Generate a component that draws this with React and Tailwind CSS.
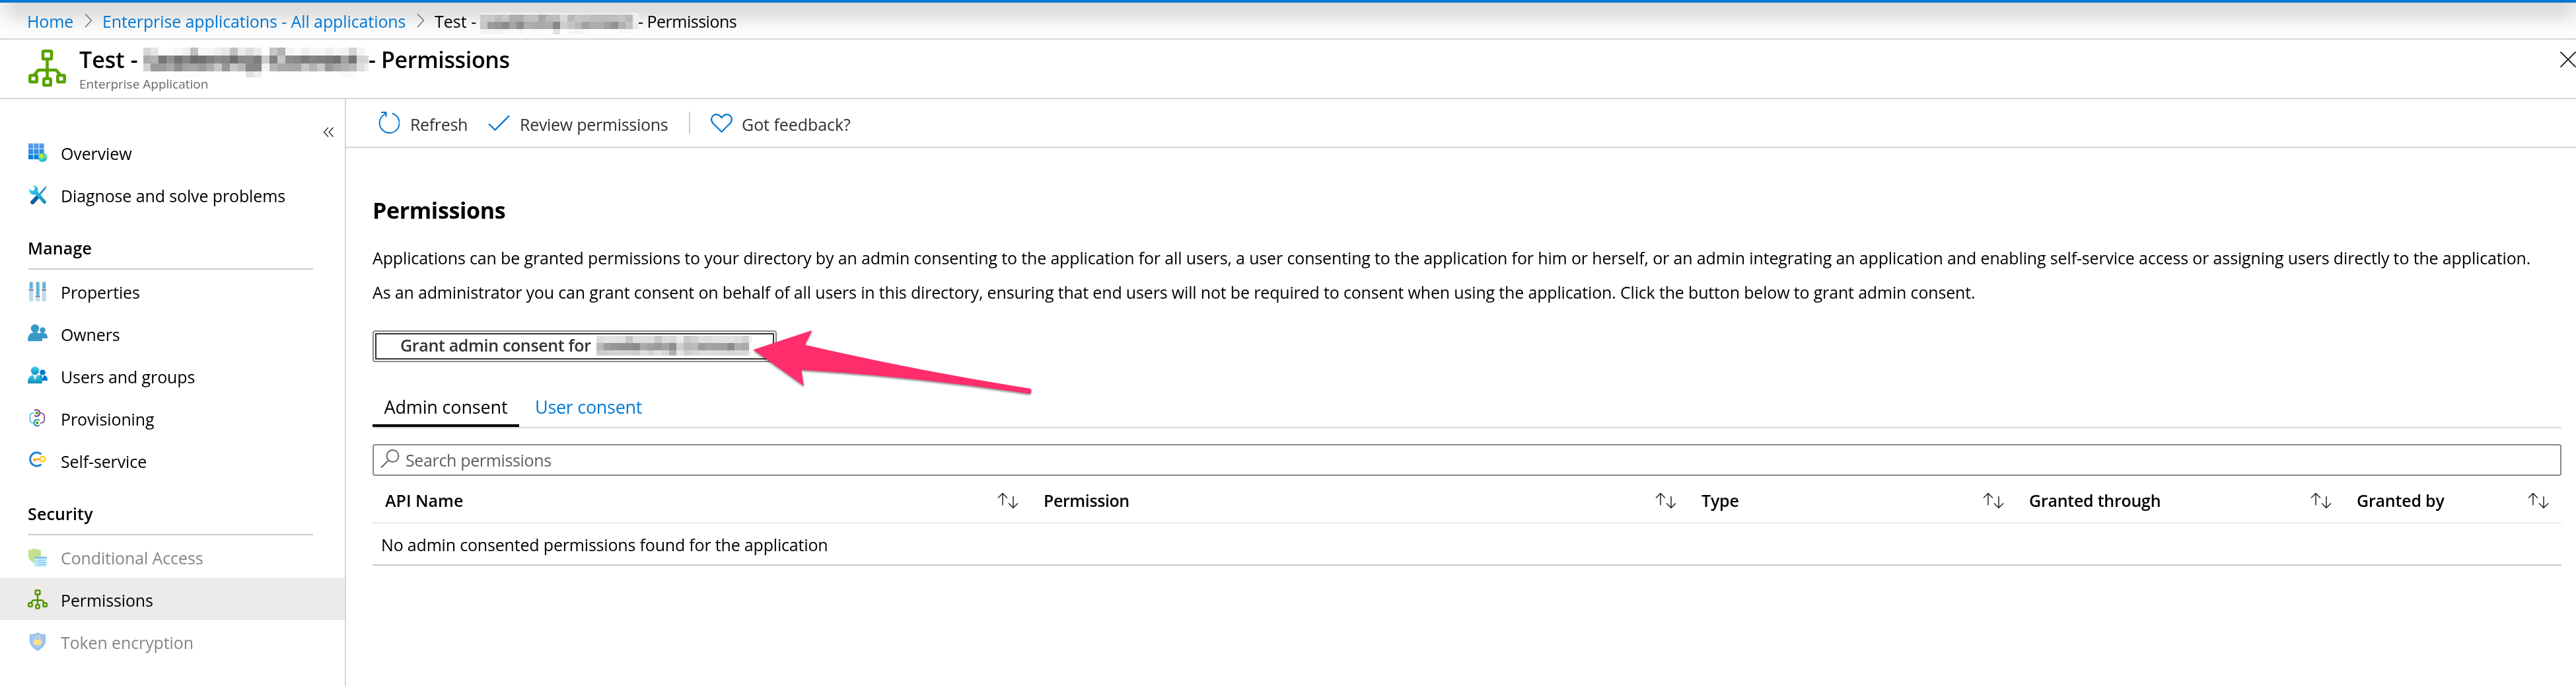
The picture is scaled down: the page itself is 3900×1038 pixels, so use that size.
import React from "react";

/* ---------- redacted names ---------- */

function Redacted({ rows, widths, heights, className = "" }) {
  return (
    <span
      className={"grid shrink-0 " + className}
      style={{ gridTemplateColumns: widths, gridTemplateRows: heights }}
    >
      {rows.flatMap((row, r) =>
        row.split(" ").map((v, c) => (
          <span key={r + "-" + c} style={{ backgroundColor: "#" + v + v + v }} />
        ))
      )}
    </span>
  );
}

const TITLE_ROWS = [
  "d6 e4 ff fa f8 f0 be f8 f5 ee e6 c0 eb dd eb ff c6 b2 f3 f8 ee f6 f8 ef f6 f2 d3 f4 fe",
  "ab b2 76 92 74 86 6d 72 80 8b 86 6f 8a 8d 7e cb 82 c6 8d 88 7b 84 7f 7a 72 a0 74 d3 d6",
  "d1 9b 9d aa 8e a3 a6 9c ab c8 98 c6 b7 88 88 f0 b5 a9 a7 a7 c6 b2 c8 98 a8 b0 b8 dd ee",
  "fd fc fc ff fe fb fa fe fe fe fb ff fe e0 ee ff fe fb fe fe fe ff fe fd fe f8 fa ff ff",
];

const CRUMB_ROWS = [
  "f1 f7 f7 f7 f7 f7 f7 f7 f7 f7 f7 f3 f6 f6 f0 f2 f2 f2 f2 f2 f0 f3",
  "cb cb bd c6 ae ae bf c0 a7 ba be d9 b8 c5 c4 be be bd be c3 b8 ee",
  "c6 9c 98 8c a4 8c ae aa a9 ac 88 cd c5 b8 a0 ad ae a0 92 b2 c2 eb",
  "f3 f7 f2 f8 fb f7 fd fa fe fd e2 ff f8 f4 fb ff ff ff ff f8 f8 fd",
];

const BUTTON_ROWS = [
  "de e4 e3 e2 c6 e0 de dd c8 dc d9 eb c9 d2 e0 dd e2 e2 e2 de d2 f0",
  "b8 9d 96 92 92 8c aa a0 9a a3 90 d0 b9 bb 9c a3 a1 a1 8c b0 a9 fa",
  "cc d0 d2 d3 d2 ce df d4 e2 d7 b0 e6 cf d5 dc dc da da d4 da da f5",
];

/* ---------- icons ---------- */

function AppIcon({ size }) {
  return (
    <svg width={size} height={size} viewBox="0 0 57 57" fill="none" stroke="#57a300" strokeWidth="4.6">
      <path d="M28.5 15v28M8.5 39l6.5-8h27l6.5 8" strokeLinejoin="round" />
      <g fill="#fff">
        <rect x="22" y="2.3" width="13" height="12" rx="1.6" />
        <rect x="2.3" y="39" width="10.4" height="10" rx="1.6" />
        <rect x="23.3" y="44" width="10.4" height="10" rx="1.6" />
        <rect x="44.3" y="39" width="10.4" height="10" rx="1.6" />
      </g>
    </svg>
  );
}

function Ico({ children }) {
  return (
    <svg width="30" height="30" viewBox="0 0 30 30" fill="none">
      {children}
    </svg>
  );
}

const OverviewIcon = () => (
  <Ico>
    <defs>
      <linearGradient id="ov" x1="0" y1="0" x2="0" y2="1">
        <stop offset="0" stopColor="#5ea0ef" />
        <stop offset="1" stopColor="#0078d4" />
      </linearGradient>
    </defs>
    <rect x="1" y="1" width="23.6" height="24" rx="0.5" fill="url(#ov)" />
    <path d="M8.8 1v24M17 1v24M1 9h23.6M1 17.2h23.6" stroke="#e8f2fc" strokeWidth="1.1" />
    <circle cx="22.5" cy="22.3" r="7" fill="#32bedd" />
    <path d="M17.5 18.5c2-2.300 4.500-2.800 6.500-1.500l-.5 2 1.500 2.500-2 1.200-1.500 4-1.800-3.700-2.800-.8zM25.500 17.500c2.500 1.500 3.500 4 3.200 6.500l-2.200-.6-.8-2.900z" fill="#b4ec36" />
  </Ico>
);

const DiagnoseIcon = () => (
  <Ico>
    <defs>
      <linearGradient id="wr" x1="0" y1="0" x2="1" y2="1">
        <stop offset="0" stopColor="#32d4f5" />
        <stop offset="1" stopColor="#198ab3" />
      </linearGradient>
    </defs>
    <path d="M27.500 1.500l.8.800-2 4.200-7.600 9-2-1.700 7.800-9z" fill="#1988b8" />
    <path d="M13 15.500l4.500 4-8 8.800c-1.200 1.200-2.800 1.300-4.200.2-1.500-1.200-1.600-2.800-.5-4.200z" fill="#0f5fa5" />
    <path d="M2.500 5.500l4 3.500 3.500-1.300.8-3.700-3.300-2.800c4.500-1 8.500 2 8 7l-.3 1.800 12.200 14.200c1.600 2-.8 5-3.400 3.800L11.500 14.300c-5.500 1.700-10-3-9-8.800z" fill="url(#wr)" />
  </Ico>
);

const PropertiesIcon = () => (
  <Ico>
    {[
      [2, 13],
      [12, 22.5],
      [21.5, 13],
    ].map(([x, y]) => (
      <g key={x}>
        <rect x={x + 0.4} y="0.4" width="5.600" height="29.2" fill="#b8deee" stroke="#d8dcdc" strokeWidth="0.9" />
        <rect x={x + 1.1} y="1.200" width="4.200" height={y - 1} fill="#59b4d9" />
        <rect x={x - 0.1} y={y - 2.4} width="6.500" height="1.600" fill="#d0d0d0" />
        <rect x={x - 0.3} y={y - 1} width="7" height="1.700" fill="#7a7a7a" />
      </g>
    ))}
  </Ico>
);

function People({ a, b, shirt, id }) {
  return (
    <Ico>
      <defs>
        <linearGradient id={id} x1="0" y1="0" x2="0" y2="1">
          <stop offset="0" stopColor={a[0]} />
          <stop offset="1" stopColor={a[1]} />
        </linearGradient>
      </defs>
      <g fill={b}>
        <circle cx="22.500" cy="9.500" r="4.300" />
        <path d="M15 22v-4.500c.8-2.800 3-4 7.500-4 5 0 7.500 3 7.500 7.500 0 .7-.4 1-1 1z" />
      </g>
      {shirt && <path d="M20.500 13.500h4.200l-2.200 5.500z" fill="#fff" />}
      <g fill={"url(#" + id + ")"}>
        <circle cx="11" cy="7" r="6.200" />
        <path d="M0 25c0-7.500 4-12.300 11-12.300S22 17.500 22 25c0 .8-.4 1.300-1.200 1.300H1.200C.4 26.300 0 25.800 0 25z" />
      </g>
      {shirt && <path d="M7.800 13h6.600L11 21.500z" fill="#fff" fillOpacity=".9" />}
    </Ico>
  );
}

const ProvisioningIcon = () => (
  <Ico>
    <path d="M10 7H8a4.500 4.500 0 0 0-4.500 4.500v6A4.500 4.500 0 0 0 8 22h2" stroke="#59b4d9" strokeWidth="1.700" />
    <path d="M18.500 7h2a4.500 4.500 0 0 1 4.500 4.500v6a4.500 4.500 0 0 1-4.500 4.500h-2" stroke="#804998" strokeWidth="1.700" />
    <path d="M10.200 3.500a4.800 4.800 0 1 1 0 7" stroke="#68217a" strokeWidth="1.800" />
    <path d="M17.800 18.300a4.800 4.800 0 1 0 0 6.800" stroke="#0072c6" strokeWidth="1.800" />
    <circle cx="14" cy="7" r="2.200" fill="#57a300" />
    <circle cx="14.200" cy="21.700" r="2.200" fill="#57a300" />
  </Ico>
);

const SelfServiceIcon = () => (
  <Ico>
    <path d="M20.500 5.300A10.200 10.200 0 1 0 20.500 20.700" stroke="#1f82d2" strokeWidth="3" />
    <rect x="8" y="11.700" width="12" height="2.300" fill="#ff9b1a" />
    <path d="M9.500 14v2.500M12 14v2.200" stroke="#ff9b1a" strokeWidth="1.500" />
    <circle cx="22.300" cy="12.800" r="3.900" stroke="#ffc90e" strokeWidth="2.300" fill="#fff" />
  </Ico>
);

const ConditionalIcon = () => (
  <Ico>
    <path d="M.700 4c4 .300 7-.8 9.500-2.400C12.700 3.200 16 4.300 20 4v8.500c0 6-5 9.500-9.800 11.500C5.500 22 .700 18.500.700 12.500z" fill="#c4e08e" />
    <rect x="10" y="14.500" width="19" height="14.800" fill="#c3f1ff" />
    <rect x="10" y="14.500" width="19" height="2.600" fill="#7fbcea" />
    <path d="M15 20h12M15 23.400h12M15 26.700h12M11.500 20h1.800M11.500 23.400h1.800M11.500 26.700h1.800" stroke="#7fbcea" strokeWidth="1.200" />
  </Ico>
);

const TokenIcon = () => (
  <Ico>
    <path d="M3 4c4.500.300 8.500-.6 12-3 3.500 2.400 7.500 3.300 12 3v9.500c0 7-6 11.500-12 15.500C9 25 3 20.500 3 13.500z" fill="#8fbdee" />
    <path d="M5 5.800c4 0 7-.9 10-2.600 3 1.700 6 2.600 10 2.600v7.600c0 5.800-5 9.700-10 13-5-3.300-10-7.200-10-13z" fill="#a3c8f3" />
    <rect x="9.500" y="12" width="11" height="8" rx=".8" fill="#ffe08a" />
    <path d="M11.700 12.500v-2.700a3.300 3.300 0 0 1 6.600 0v2.700" stroke="#e9d59b" strokeWidth="1.700" />
  </Ico>
);

const Chevron = () => (
  <svg width="12" height="22" viewBox="0 0 12 22" fill="none" stroke="#6b6b6b" strokeWidth="1.400" className="shrink-0">
    <path d="M1 1l9.500 10L1 21" />
  </svg>
);

const SortIcon = () => (
  <svg width="32" height="25" viewBox="0 0 32 25" fill="none" stroke="#222" strokeWidth="1.500">
    <path d="M8 19.500V1.500M1 8.500l7-7 7 7M24 6v17.500M17 16.500l7 7 7-7" />
  </svg>
);

/* ---------- sidebar ---------- */

function NavRow({ icon, children, active, muted }) {
  return (
    <li className={"flex h-16 items-center gap-5 pl-[42px] " + (active ? "bg-[#edebe9]" : "")}>
      <span className={"mt-0.5 block h-[30px] w-[30px] shrink-0 " + (active ? "mix-blend-multiply" : "")}>{icon}</span>
      <span className={"pt-1 leading-[36px] tracking-[-0.12px] " + (muted ? "text-[#858585]" : "")}>{children}</span>
    </li>
  );
}

function NavHeading({ children }) {
  return (
    <h3 className="mr-12 ml-[42px] flex h-[82px] items-center border-b-2 border-[#ccc] pt-[18px] font-semibold leading-[36px] tracking-[0.15px]">
      {children}
    </h3>
  );
}

function Sidebar() {
  return (
    <nav className="flex w-[524px] shrink-0 flex-col border-r-2 border-[#d6d6d6]">
      <div className="flex h-12 justify-end pr-4">
        <svg width="17" height="16" viewBox="0 0 17 16" fill="none" stroke="#222" strokeWidth="1.300" className="mt-[42px] shrink-0">
          <path d="M8 1L1.500 8 8 15M15.500 1L9 8l6.500 7" />
        </svg>
      </div>
      <ul>
        <NavRow icon={<OverviewIcon />}>Overview</NavRow>
        <NavRow icon={<DiagnoseIcon />}>Diagnose and solve problems</NavRow>
      </ul>
      <NavHeading>Manage</NavHeading>
      <ul>
        <NavRow icon={<PropertiesIcon />}>Properties</NavRow>
        <NavRow icon={<People id="p1" a={["#3999c6", "#3999c6"]} b="#3999c6" />}>Owners</NavRow>
        <NavRow icon={<People id="p2" a={["#32d4f5", "#198ab3"]} b="#0078d4" shirt />}>Users and groups</NavRow>
        <NavRow icon={<ProvisioningIcon />}>Provisioning</NavRow>
        <NavRow icon={<SelfServiceIcon />}>Self-service</NavRow>
      </ul>
      <NavHeading>Security</NavHeading>
      <ul>
        <NavRow icon={<ConditionalIcon />} muted>Conditional Access</NavRow>
        <NavRow icon={<AppIcon size={30} />} active>Permissions</NavRow>
        <NavRow icon={<TokenIcon />} muted>Token encryption</NavRow>
      </ul>
    </nav>
  );
}

/* ---------- main panel ---------- */

function Toolbar() {
  return (
    <div className="flex h-[74px] items-center border-b-2 border-[#d6d6d6] pl-[49px] text-[#323130]">
      <svg width="32" height="34" viewBox="0 0 32 34" fill="none" stroke="#0078d4" strokeWidth="2" className="mb-0.5">
        <path d="M20.500 3.600A15 15 0 1 1 8.500 5.500L11 3M4 2h7.500v7" />
      </svg>
      <span className="ml-4 w-[85px] pt-1 tracking-[-0.35px]">Refresh</span>
      <svg width="33" height="24" viewBox="0 0 33 24" fill="none" stroke="#0078d4" strokeWidth="2.400" className="ml-[33px]">
        <path d="M1 13.500l9.500 9L32 1" />
      </svg>
      <span className="ml-[15px] w-[225px] pt-1 tracking-[-0.29px]">Review permissions</span>
      <span className="ml-[31px] h-[34px] w-0.5 bg-[#ccc]" />
      <svg width="33" height="29" viewBox="0 0 33 29" fill="none" stroke="#0078d4" strokeWidth="2.200" className="ml-[31px]">
        <path d="M16.500 27.500L3.500 14.500C0 11 .500 6 3.500 3.200 7 0 12.500.500 16.500 6c4-5.500 9.500-6 13-2.800 3 2.800 3.500 7.800 0 11.300z" strokeLinejoin="round" />
      </svg>
      <span className="ml-3.5 pt-1 tracking-[-0.05px]">Got feedback?</span>
    </div>
  );
}

function Pointer() {
  return (
    <svg
      width="440"
      height="116"
      viewBox="1130 490 440 116"
      className="absolute top-[-10px] left-[566px] drop-shadow-[0_2px_1.5px_rgba(0,0,0,0.45)]"
    >
      <path
        d="M1140.400 529.300L1229.600 499.700 1218.600 521.700Q1388 561 1558.600 587.700A4.100 4.100 0 0 1 1557.900 595.700Q1385 570 1213.200 559.700L1217 583.700z"
        fill="#ff2d6c"
      />
    </svg>
  );
}

const COLUMNS = [
  ["API Name", "tracking-normal"],
  ["Permission", "tracking-[-0.4px]"],
  ["Type", "tracking-[-0.2px]"],
  ["Granted through", "tracking-[-0.25px]"],
  ["Granted by", "tracking-[-0.2px]"],
];

function PermissionsTable() {
  return (
    <div>
      <div className="grid h-[72px] grid-cols-[997px_996px_496px_496px_329px] border-b-2 border-[#ebebeb]">
        {COLUMNS.map(([name, tracking]) => (
          <div key={name} className="flex items-center justify-between pt-1 pr-[19px] pl-[19px] font-semibold">
            <span className={tracking}>{name}</span>
            <SortIcon />
          </div>
        ))}
      </div>
      <div className="flex h-16 items-center border-b-2 border-[#c8c8c8] pt-0.5 pl-[13px] tracking-[-0.18px]">
        No admin consented permissions found for the application
      </div>
    </div>
  );
}

function Main() {
  return (
    <main className="min-w-0 grow">
      <Toolbar />
      <div className="mr-[22px] ml-10 pt-[74px]">
        <h2 className="h-10 text-[34px] leading-10 font-bold tracking-[-0.35px]">Permissions</h2>
        <p className="mt-[34px] h-9 leading-9 tracking-[-0.145px] whitespace-nowrap">
          Applications can be granted permissions to your directory by an admin consenting to the application for all
          users, a user consenting to the application for him or herself, or an admin integrating an application and
          enabling self-service access or assigning users directly to the application.
        </p>
        <p className="mt-4 h-9 leading-9 tracking-[-0.165px] whitespace-nowrap">
          As an administrator you can grant consent on behalf of all users in this directory, ensuring that end users
          will not be required to consent when using the application. Click the button below to grant admin consent.
        </p>

        <div className="relative mt-10 h-12 w-[612px]">
          <button className="block h-12 w-[612px] rounded-[4px] border-2 border-[#8a8886] p-0.5 text-[#323130]">
            <span className="flex h-10 items-start border-2 border-[#323130] pl-9">
              <span className="w-[297px] text-left leading-8 font-semibold tracking-[-0.34px] whitespace-nowrap">
                Grant admin consent for
              </span>
              <Redacted rows={BUTTON_ROWS} widths="repeat(21, 11px) 4px" heights="11px 11px 8px" className="mt-0.5" />
            </span>
          </button>
          <Pointer />
        </div>

        <div className="mt-10 flex h-[60px] border-b-2 border-[#d6d6d6] text-[27px]">
          <div className="h-[58px] w-[222px] border-b-4 border-black text-center leading-[55px] tracking-[-0.15px]">Admin consent</div>
          <div className="pl-6 leading-[55px] tracking-[-0.3px] text-[#0078d4]">User consent</div>
        </div>

        <div className="mt-6 flex h-12 items-center rounded-[4px] border-2 border-[#8a8886] pl-2.5 text-[#605e5c]">
          <svg width="29" height="29" viewBox="0 0 29 29" fill="none" stroke="#605e5c" strokeWidth="1.800" className="mb-1">
            <circle cx="18.500" cy="10" r="9" />
            <path d="M12 16.500L1 27.500" />
          </svg>
          <span className="ml-[9px] tracking-[-0.35px]">Search permissions</span>
        </div>

        <PermissionsTable />
      </div>
    </main>
  );
}

/* ---------- page ---------- */

export default function App() {
  return (
    <div className="flex h-[1038px] w-[3900px] flex-col overflow-hidden bg-white font-['Open_Sans','Noto_Sans',sans-serif] text-[25px] leading-9 text-black">
      <div className="h-1 shrink-0 bg-[#0078d4]" />
      <div className="flex h-14 shrink-0 border-b-2 border-[#d6d6d6] bg-[linear-gradient(to_right,rgba(255,255,255,0.6),transparent_28px,transparent_3876px,rgba(255,255,255,0.4)),linear-gradient(to_bottom,#dadada,#e2e2e2_16px,#efefef_27px,#f8f8f8_38px,#ffffff_52px)] pl-[41px]">
        <div className="flex h-[54px] items-center whitespace-nowrap">
          <span className="w-[87px] pt-0.5 tracking-[-0.1px] text-[#0078d4]">Home</span>
          <Chevron />
          <span className="ml-[15px] w-[476px] pt-0.5 tracking-[-0.1px] text-[#0078d4]">
            Enterprise applications - All applications
          </span>
          <Chevron />
          <span className="ml-[15px] w-[69px] pt-0.5">Test -</span>
          <Redacted
            rows={CRUMB_ROWS}
            widths="11px repeat(20, 11px) 9px"
            heights="2px 11px 11px 8px"
            className="mt-2.5"
          />
          <span className="-ml-px pt-0.5 tracking-[-0.5px]">- Permissions</span>
        </div>
      </div>

      <header className="flex h-[90px] shrink-0 justify-between border-b-2 border-[#d6d6d6] pl-[43px]">
        <div className="flex">
          <div className="mt-[15px] mr-5 w-[57px]">
            <AppIcon size={57} />
          </div>
          <div className="pt-3 whitespace-nowrap">
            <h1 className="flex h-9 text-[34px] leading-[37px] font-semibold">
              <span className="w-[97px]">Test -</span>
              <Redacted
                rows={TITLE_ROWS}
                widths="11px repeat(27, 12px) 6px"
                heights="12px 12px 12px 9px"
              />
              <span className="tracking-[-0.35px]">- Permissions</span>
            </h1>
            <div className="mt-[7px] h-6 text-[19px] leading-6 text-[#666]">Enterprise Application</div>
          </div>
        </div>
        <svg width="24" height="24" viewBox="0 0 24 24" fill="none" stroke="#111" strokeWidth="1.700" className="mt-[18px]">
          <path d="M.500.500l23 23M23.500.500l-23 23" />
        </svg>
      </header>

      <div className="flex min-h-0 grow">
        <Sidebar />
        <Main />
      </div>
    </div>
  );
}
